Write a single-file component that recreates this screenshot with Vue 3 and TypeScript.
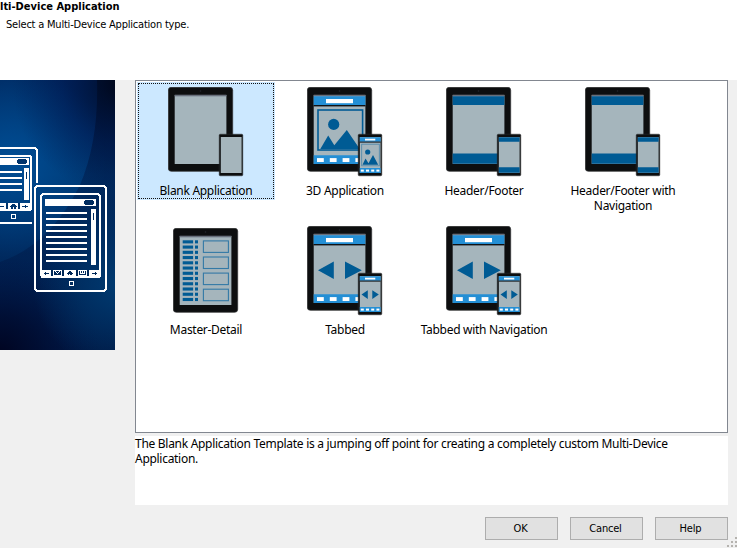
<script setup lang="ts">
import { ref } from 'vue'

type Kind = 'blank' | '3d' | 'bars' | 'tabs' | 'master'
interface Template { id: string; name: string; kind: Kind }

const templates: Template[] = [
  { id: 'blank', name: 'Blank Application', kind: 'blank' },
  { id: 'threed', name: '3D Application', kind: '3d' },
  { id: 'hf', name: 'Header/Footer', kind: 'bars' },
  { id: 'hfnav', name: 'Header/Footer with Navigation', kind: 'bars' },
  { id: 'master', name: 'Master-Detail', kind: 'master' },
  { id: 'tabbed', name: 'Tabbed', kind: 'tabs' },
  { id: 'tabnav', name: 'Tabbed with Navigation', kind: 'tabs' },
]
const selected = ref('blank')
const buttons = ['OK', 'Cancel', 'Help']
const range = (n: number): number[] => Array.from({ length: n }, (_, i) => i)
</script>

<template>
  <div class="dialog">
    <header class="head">
      <h1 class="title">lti-Device Application</h1>
      <p class="subtitle">Select a Multi-Device Application type.</p>
    </header>

    <div class="body">
      <svg class="banner" width="115" height="270" viewBox="0 0 115 270">
        <defs>
          <linearGradient id="base" x1="0" y1="0" x2="0" y2="1">
            <stop offset="0" stop-color="#002a62" />
            <stop offset=".35" stop-color="#003872" />
            <stop offset=".62" stop-color="#002c62" />
            <stop offset="1" stop-color="#001c48" />
          </linearGradient>
          <radialGradient id="glow" gradientUnits="userSpaceOnUse" cx="12" cy="80" r="95">
            <stop offset="0" stop-color="#004d94" />
            <stop offset="1" stop-color="#004d94" stop-opacity="0" />
          </radialGradient>
          <radialGradient id="shadeTop" gradientUnits="userSpaceOnUse" cx="122" cy="5" r="110">
            <stop offset="0" stop-color="#000618" />
            <stop offset=".2" stop-color="#000a28" stop-opacity=".7" />
            <stop offset=".55" stop-color="#001048" stop-opacity=".4" />
            <stop offset="1" stop-color="#00164a" stop-opacity="0" />
          </radialGradient>
          <radialGradient id="shadeLow" gradientUnits="userSpaceOnUse" cx="0" cy="275" r="100">
            <stop offset="0" stop-color="#000420" />
            <stop offset=".4" stop-color="#00082a" stop-opacity=".65" />
            <stop offset="1" stop-color="#001040" stop-opacity="0" />
          </radialGradient>
          <radialGradient id="glowLow" gradientUnits="userSpaceOnUse" cx="118" cy="205" r="85">
            <stop offset="0" stop-color="#003a70" />
            <stop offset="1" stop-color="#003a70" stop-opacity="0" />
          </radialGradient>
          <linearGradient id="arc" x1="0" y1="0" x2="0" y2="1">
            <stop offset="0" stop-color="#000618" stop-opacity=".5" />
            <stop offset=".4" stop-color="#000830" stop-opacity=".3" />
            <stop offset="1" stop-color="#000830" stop-opacity=".15" />
          </linearGradient>
        </defs>
        <rect width="115" height="270" fill="url(#base)" />
        <rect width="115" height="270" fill="url(#glow)" />
        <rect width="115" height="270" fill="url(#shadeTop)" />
        <path d="M97 0Q99 60 80 105Q50 165 0 182V270H115V0Z" fill="url(#arc)" />
        <rect width="115" height="270" fill="url(#shadeLow)" />
        <rect width="115" height="270" fill="url(#glowLow)" />

        <g shape-rendering="crispEdges">
          <path d="M0 68H35L37 70V103M0 143H32" fill="none" stroke="#fff" stroke-width="2" />
          <path d="M0 76H30L31 77V129L30 130H0" fill="none" stroke="#fff" stroke-width="2" />
          <rect x="0" y="78" width="29" height="7" fill="#fff" />
          <path d="M18 79h8v1h1v3h-1v1h-8v-1h-1v-3h1z" fill="#00346c" />
          <rect x="24" y="88" width="5" height="32" fill="#fff" />
          <rect x="26" y="92" width="1" height="7" fill="#00346c" />
          <rect v-for="i in range(4)" :key="'b' + i" x="0" :y="91 + i * 6" width="22" height="2" fill="#fff" />
          <rect x="0" y="123" width="31" height="7" fill="#fff" />
          <path d="M0 126h4v1H0zM6 123h2v6H6zM10 126h1v-1h1v-1h3v1h1v1h1v1h-1v2h-2v-2h-1v2h-2v-2h-1zM18 123h2v6h-2zM22 126h3v-1h1v1h2v1h-2v1h-1v-1h-3z" fill="#00346c" />
          <rect x="11.5" y="134.5" width="4" height="4" fill="none" stroke="#fff" />

          <path d="M37 106H104L106 108V209L104 211H37L35 209V108Z" fill="none" stroke="#fff" stroke-width="2" />
          <path d="M43 114H98L100 116V196L98 197H43L41 195V116Z" fill="none" stroke="#fff" stroke-width="2" />
          <rect x="45" y="119" width="51" height="7" fill="#fff" />
          <path d="M85 120h8v1h1v3h-1v1h-8v-1h-1v-3h1z" fill="#002c60" />
          <rect x="91" y="129" width="5" height="56" fill="#fff" />
          <rect x="93" y="133" width="1" height="7" fill="#002c60" />
          <rect v-for="i in range(9)" :key="'f' + i" x="46" :y="132 + i * 6" width="41" height="2" fill="#fff" />
          <rect x="41" y="190" width="59" height="8" fill="#fff" />
          <g fill="#002858">
            <path d="M51 190h2v6h-2zM62 190h2v6h-2zM76 190h2v6h-2zM87 190h2v6h-2z" />
            <path d="M44 193h1v-1h1v1h3v1h-3v1h-1v-1h-1zM92 193h3v-1h1v1h1v1h-1v1h-1v-1h-3z" />
            <path d="M54 191h7v4h-7z" />
            <path d="M67 193h1v-1h1v-1h2v1h1v1h1v1h-1v1h-2v-1h-1v1h-1v-1h-1zM79 191h7v4h-7z" />
          </g>
          <path d="M55 191h1v1h1v1h1v-1h1v-1h1v1h-1v1h-1v1h-1v-1h-1v-1h-1zM80 191h1v2h1v-2h1v2h1v-2h1v3h-5z" fill="#fff" />
          <rect x="69.5" y="201.5" width="4" height="4" fill="none" stroke="#fff" />
        </g>
      </svg>

      <main class="panel">
        <div class="list">
          <div
            v-for="t in templates"
            :key="t.id"
            class="item"
            :class="{ selected: selected === t.id, master: t.kind === 'master' }"
            @click="selected = t.id"
          >
            <svg class="icon" width="76" height="90" viewBox="0 0 76 90">
              <rect x=".3" y=".3" width="64.4" height="84" rx="3" fill="#0d0e0f" stroke="#303234" stroke-width=".7" />
              <circle cx="32.5" cy="4" r=".8" fill="#25282d" />
              <rect x="6.7" y="8" width="51.7" height="69" fill="#a5b5bc" />
              <rect x="6.7" y="7.7" width="51.7" height="1.6" fill="#686f7b" />

              <template v-if="t.kind === 'bars'">
                <path d="M6.7 9.2h51.7V18H6.7zM6.7 66.5h51.7v10.2H6.7z" fill="#005b94" />
              </template>

              <template v-if="t.kind === '3d' || t.kind === 'tabs'">
                <path d="M6.7 9.2h51.7V18H6.7zM6.7 68.2h51.7V77H6.7z" fill="#248fd5" />
                <rect x="6.7" y="18" width="51.7" height="1.4" fill="#101214" />
                <rect x="19" y="12" width="27" height="4.2" fill="#fff" />
                <rect v-for="i in range(4)" :key="i" :x="10 + i * 12.8" y="71.1" width="6.8" height="3.9" fill="#fff" />
              </template>
              <g v-if="t.kind === '3d'" fill="#005b94">
                <rect x="11" y="23" width="44.6" height="40" fill="none" stroke="#005b94" stroke-width="1.6" />
                <circle cx="26.7" cy="37.4" r="5.6" />
                <path d="M13.3 62L21.2 48.6L27.3 58.3L39.8 43L52.8 62Z" />
              </g>
              <path v-if="t.kind === 'tabs'" d="M11 44.3L26.8 35.6V53ZM54.8 44.3L38 35.6V53Z" fill="#005b94" />

              <g v-if="t.kind === 'master'" fill="#005b94">
                <template v-for="i in range(12)" :key="i">
                  <rect x="9.7" :y="12.3 + i * 5.24" width="10.4" height="3.1" />
                  <rect x="22" :y="12.3 + i * 5.24" width="3" height="3.1" />
                </template>
                <rect v-for="i in range(4)" :key="'r' + i" x="30.4" :y="12.9 + i * 16.1" width="25" height="11.5" fill="none" stroke="#3379a6" stroke-width="1.1" />
              </g>

              <template v-if="t.kind !== 'master'">
                <rect x="51.2" y="47.2" width="23.6" height="41.6" rx="1" fill="#0d0e0f" stroke="#303234" stroke-width=".5" />
                <rect x="52.8" y="50" width="20.8" height="36" fill="#a5b5bc" />
                <path v-if="t.kind === 'bars'" d="M52.8 50.3h20.8v4.5H52.8zM52.8 80.3h20.8v5.4H52.8z" fill="#005b94" />
                <template v-if="t.kind === '3d' || t.kind === 'tabs'">
                  <path d="M52.8 50.3h20.8v4.4H52.8zM52.8 81h20.8v5H52.8z" fill="#248fd5" />
                  <rect x="52.8" y="54.6" width="20.8" height="1" fill="#101214" />
                  <rect x="58" y="51.7" width="10.3" height="1.8" fill="#fff" />
                  <rect v-for="i in range(4)" :key="'p' + i" :x="53.8 + i * 5.2" y="82.6" width="3" height="2" fill="#fff" />
                </template>
                <g v-if="t.kind === '3d'" fill="#005b94">
                  <rect x="54.7" y="57.2" width="17.6" height="21.6" fill="none" stroke="#4c87ab" stroke-width=".8" />
                  <circle cx="60.7" cy="65" r="2.6" />
                  <path d="M55.5 77.8L58.5 71.6L61.5 76.2L66 68L71.2 77.8Z" />
                </g>
                <path v-if="t.kind === 'tabs'" d="M54.5 68.6L60.8 64.2V73ZM71.8 68.6L65.3 64.2V73Z" fill="#005b94" />
              </template>
            </svg>
            <div class="label">{{ t.name }}</div>
          </div>
        </div>

        <div class="memo">The Blank Application Template is a jumping off point for creating a completely custom Multi-Device Application.</div>

        <footer class="actions">
          <button v-for="b in buttons" :key="b" class="btn" type="button">{{ b }}</button>
        </footer>
      </main>
    </div>

    <svg class="grip" width="10" height="11" viewBox="0 0 10 11">
      <path d="M8 0h2v2H8zM4 4h2v2H4zM8 4h2v2H8zM0 8h2v2H0zM4 8h2v2H4zM8 8h2v2H8z" fill="#b5b3af" />
    </svg>
  </div>
</template>

<style>
body { background: #f0f0f0; overflow: hidden; }
</style>

<style scoped>
.dialog { position: relative; width: 737px; height: 548px; overflow: hidden; background: #f0f0f0; color: #000; font: 12px/15px "Noto Sans", "Open Sans", sans-serif; letter-spacing: -0.29px; }
.head { box-sizing: border-box; height: 80px; background: #fff; white-space: nowrap; letter-spacing: 0; }
.title { margin: 0; font: bold 11px/13px "DejaVu Sans Condensed", "DejaVu Sans", sans-serif; font-stretch: condensed; }
.subtitle { margin: 0; padding: 5px 0 0 6px; font: 11px/14px "DejaVu Sans Condensed", "DejaVu Sans", sans-serif; font-stretch: condensed; letter-spacing: -0.21px; }
.body { display: flex; align-items: flex-start; gap: 20px; }
.banner { display: block; flex: none; }
.panel { width: 593px; }
.list { box-sizing: border-box; height: 353px; border: 1px solid #828790; background: #fff; padding: 1px; display: grid; grid-template-columns: repeat(4, 138px); grid-auto-rows: 138px; gap: 1px; align-content: start; }
.item { box-sizing: border-box; height: 118px; padding: 5px 0 0 31px; }
.item.selected { background: #cce8ff; outline: 1px dotted #111; outline-offset: -2px; }
.icon { display: block; }
.master .icon { transform: translate(5px, 2px); }
.label { margin: 6px 0 0 -31px; padding: 0 4px; text-align: center; }
.memo { box-sizing: border-box; margin-top: 3px; height: 69px; background: #fff; }
.actions { display: flex; justify-content: flex-end; gap: 12px; margin-top: 12px; }
.btn { box-sizing: border-box; width: 73px; height: 23px; padding: 0 2px 0 0; border: 1px solid #adadad; background: #e1e1e1; color: #000; font: 11px/14px "DejaVu Sans Condensed", "DejaVu Sans", sans-serif; font-stretch: condensed; letter-spacing: -0.2px; }
.grip { position: absolute; right: 0; bottom: 0; }
</style>
